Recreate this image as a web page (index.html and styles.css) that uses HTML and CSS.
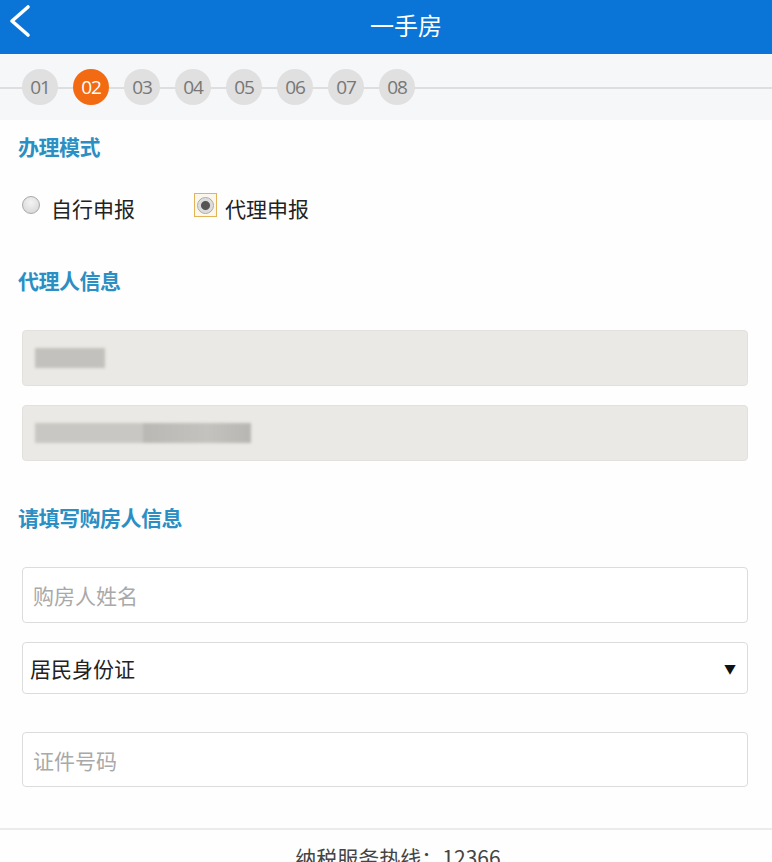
FILE: index.html
```html
<!DOCTYPE html>
<html lang="zh-CN">
<head>
    <meta charset="UTF-8">
    <meta name="viewport" content="width=device-width, initial-scale=1.0">
    <title>一手房</title>
    <link rel="stylesheet" href="styles.css">
</head>
<body>
    <header class="topbar">
        <a class="back" href="#">
            <svg width="28" height="34" viewBox="0 0 28 34">
                <path d="M22 3 L6 17 L22 31" fill="none" stroke="#fff" stroke-width="3.6" stroke-linecap="round" stroke-linejoin="round"/>
            </svg>
        </a>
        <h1>一手房</h1>
    </header>

    <div class="steps">
        <span class="step">01</span>
        <span class="step active">02</span>
        <span class="step">03</span>
        <span class="step">04</span>
        <span class="step">05</span>
        <span class="step">06</span>
        <span class="step">07</span>
        <span class="step">08</span>
    </div>

    <main class="content">
        <h2 class="title first">办理模式</h2>
        <div class="radios">
            <label class="radio">
                <span class="dot"></span>
                自行申报
            </label>
            <label class="radio checked">
                <span class="focus"><span class="dot"></span></span>
                代理申报
            </label>
        </div>

        <h2 class="title agent">代理人信息</h2>
        <div class="field readonly">
            <span class="blur short"></span>
        </div>
        <div class="field readonly gap">
            <span class="blur long"></span>
        </div>

        <h2 class="title buyer">请填写购房人信息</h2>
        <div class="field input">
            <span class="placeholder">购房人姓名</span>
        </div>
        <div class="field select">
            <span>居民身份证</span>
            <span class="arrow">▼</span>
        </div>
        <div class="field input last">
            <span class="placeholder">证件号码</span>
        </div>
    </main>

    <footer class="footer">
        纳税服务热线：12366
    </footer>
</body>
</html>
```

FILE: styles.css
```css
body {
    margin: 0;
    background: #fefefe;
    font-family: "Noto Sans CJK SC", "Noto Sans", sans-serif;
    color: #333;
    width: 772px;
    height: 862px;
    overflow: hidden;
}

.topbar {
    box-sizing: border-box;
    height: 54px;
    background: #0b74d7;
    display: flex;
    align-items: center;
    justify-content: center;
    padding-left: 40px;
    padding-bottom: 6px;
    position: relative;
}

.topbar h1 {
    margin: 0;
    font-size: 24px;
    font-weight: normal;
    color: #fff;
}

.back {
    position: absolute;
    left: 6px;
    top: 4px;
    display: flex;
}

.steps {
    height: 66px;
    background: #f6f7f9 linear-gradient(#dedede, #dedede) no-repeat 0 33px / 100% 2px;
    display: flex;
    align-items: center;
    gap: 15px;
    padding-left: 22px;
}

.step {
    width: 36px;
    height: 36px;
    border-radius: 50%;
    background: #e0e0e0;
    color: #777;
    font-size: 19px;
    display: flex;
    align-items: center;
    justify-content: center;
    font-family: "Open Sans", sans-serif;
    letter-spacing: -1px;
}

.step.active {
    background: #f26a12;
    color: #fff;
}

.content {
    padding: 0 24px 0 22px;
}

.title {
    margin: 0 0 0 -4px;
    font-size: 21px;
    line-height: 28px;
    font-weight: bold;
    color: #2b8fc4;
    letter-spacing: -0.5px;
}

.title.first {
    margin-top: 12px;
}

.title.agent {
    margin-top: 44px;
    margin-bottom: 36px;
}

.title.buyer {
    margin-top: 42px;
    margin-bottom: 36px;
}

.radios {
    display: flex;
    align-items: center;
    margin-top: 34px;
    height: 28px;
}

.radio {
    display: flex;
    align-items: center;
    font-size: 21px;
    color: #222;
    line-height: 28px;
}

.radio .dot {
    width: 18px;
    height: 18px;
    border-radius: 50%;
    border: 1px solid #a9a9a9;
    background: radial-gradient(circle at 50% 35%, #f4f4f4, #d2d2d2);
    margin-right: 11px;
    margin-top: -6px;
    box-sizing: border-box;
}

.radio.checked {
    margin-left: 59px;
}

.focus {
    width: 23px;
    height: 24px;
    border: 1px solid #e3b457;
    box-sizing: border-box;
    display: flex;
    align-items: center;
    justify-content: center;
    margin-right: 8px;
    margin-top: -6px;
    background: #fbf7ec;
}

.radio.checked .dot {
    margin: 0;
    width: 17px;
    height: 17px;
    background: radial-gradient(circle, #555 0, #555 4px, #d8d8d8 5px, #eee 100%);
}

.field {
    box-sizing: border-box;
    height: 56px;
    border-radius: 4px;
    display: flex;
    align-items: center;
    padding: 0 10px 0 10px;
    font-size: 21px;
}

.readonly {
    background: #eae9e5;
    border: 1px solid #e2e1dd;
    padding-left: 12px;
}

.readonly.gap {
    margin-top: 19px;
}

.blur {
    display: block;
    height: 20px;
    background: #c2c1bd;
    filter: blur(1.5px);
}

.blur.short {
    width: 70px;
}

.blur.long {
    width: 216px;
    background: linear-gradient(90deg, #c8c7c3 0, #c8c7c3 50%, #b9b8b4 50%, #c3c2be 80%, #b7b6b2 100%);
}

.input {
    border: 1px solid #dcdcdc;
    background: #fff;
}

.placeholder {
    color: #a9a9a9;
}

.select {
    margin-top: 19px;
    height: 52px;
    border: 1px solid #dcdcdc;
    background: #fff;
    justify-content: space-between;
    padding-left: 7px;
    padding-right: 11px;
    color: #222;
}

.arrow {
    font-size: 12px;
    color: #111;
}

.input.last {
    margin-top: 38px;
    height: 55px;
}

.footer {
    margin-top: 41px;
    border-top: 2px solid #ececec;
    text-align: center;
    font-size: 21px;
    color: #444;
    padding-top: 12px;
    padding-left: 24px;
}
```
